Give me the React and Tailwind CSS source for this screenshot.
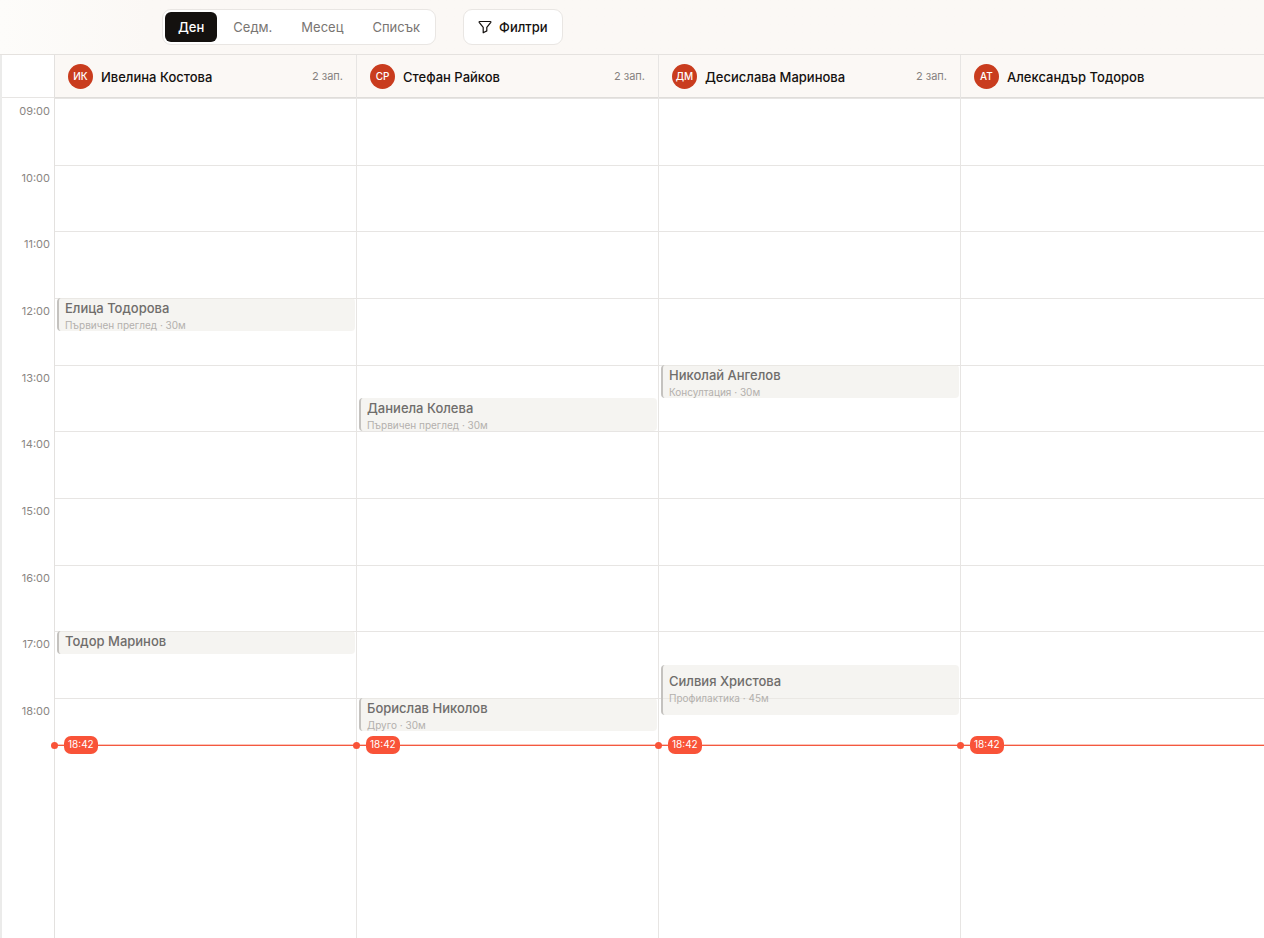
import clsx from "clsx";

const DAY_START = 9 * 60;
const TRACK_MINUTES = 9 * 60;
const NOW = "18:42";

const VIEWS = ["Ден", "Седм.", "Месец", "Списък"];

const HOURS = [
  "09:00",
  "10:00",
  "11:00",
  "12:00",
  "13:00",
  "14:00",
  "15:00",
  "16:00",
  "17:00",
];

const STAFF = [
  {
    initials: "ИК",
    name: "Ивелина Костова",
    count: 2,
    appointments: [
      { client: "Елица Тодорова", service: "Първичен преглед", start: "12:00", minutes: 30 },
      { client: "Тодор Маринов", start: "17:00", minutes: 20 },
    ],
  },
  {
    initials: "СР",
    name: "Стефан Райков",
    count: 2,
    appointments: [
      { client: "Даниела Колева", service: "Първичен преглед", start: "13:30", minutes: 30 },
      { client: "Борислав Николов", service: "Друго", start: "18:00", minutes: 30 },
    ],
  },
  {
    initials: "ДМ",
    name: "Десислава Маринова",
    count: 2,
    appointments: [
      { client: "Николай Ангелов", service: "Консултация", start: "13:00", minutes: 30 },
      { client: "Силвия Христова", service: "Профилактика", start: "17:30", minutes: 45 },
    ],
  },
  {
    initials: "АТ",
    name: "Александър Тодоров",
    count: 0,
    appointments: [],
  },
];

const toMinutes = (time) => {
  const [h, m] = time.split(":").map(Number);
  return h * 60 + m;
};

const toPercent = (minutes) => `${(minutes / TRACK_MINUTES) * 100}%`;

function FilterIcon() {
  return (
    <svg
      viewBox="0 0 14 14"
      className="w-3.5 h-3.5"
      fill="none"
      stroke="currentColor"
      strokeWidth="1.2"
      strokeLinejoin="round"
      aria-hidden="true"
    >
      <path d="M1.6 1.5h10.8a.5.5 0 0 1 .4.8L8.8 7.3v3.6L5.2 12.8V7.3L1.2 2.3a.5.5 0 0 1 .4-.8Z" />
    </svg>
  );
}

function Toolbar() {
  return (
    <header className="flex items-center gap-[27px] h-[55px] pl-[162px] border-b border-[#e5e2df] bg-linear-to-r from-[#fdfcfa] to-[#fbf8f5] to-[150px]">
      <div className="flex h-9 gap-[3px] p-0.5 rounded-[9px] border border-[#e9e6e3] bg-white">
        {VIEWS.map((view, i) => (
          <button
            key={view}
            type="button"
            aria-pressed={i === 0}
            className={clsx(
              "px-[13px] rounded-md text-[13px] leading-5",
              i === 0 ? "bg-[#14110f] text-white font-medium" : "text-[#797572]"
            )}
          >
            {view}
          </button>
        ))}
      </div>
      <button
        type="button"
        className="flex items-center gap-[7px] h-9 px-3.5 rounded-[9px] border border-[#e9e6e3] bg-white text-[13px] leading-5 font-medium text-[#14110f]"
      >
        <FilterIcon />
        Филтри
      </button>
    </header>
  );
}

function Appointment({ client, service, start, minutes }) {
  return (
    <article
      className={clsx(
        "absolute left-0.5 right-px overflow-hidden rounded-[4px] border-l-2 border-[#c4c2bf] bg-[#edebe5]/55 pl-1.5",
        minutes > 30 && "pt-1.5"
      )}
      style={{
        top: toPercent(toMinutes(start) - DAY_START),
        height: toPercent(minutes),
      }}
    >
      <h3 className="text-[13px] leading-5 font-medium text-[#6f6d6b] truncate">
        {client}
      </h3>
      {service && (
        <p className="text-[10px] leading-[14px] text-[#b3b0ad] truncate">
          {service} · {minutes}м
        </p>
      )}
    </article>
  );
}

function NowLine() {
  return (
    <div
      className="absolute inset-x-0 z-10 border-t border-[#f4583f] shadow-[0_-1px_0_#fbc4b9]"
      style={{ top: toPercent(toMinutes(NOW) - DAY_START) }}
    >
      <span className="absolute -left-1 -top-1 w-[7px] h-[7px] rounded-full bg-[#f95338]" />
      <time className="absolute left-[9px] -top-2.5 h-[18px] px-1 rounded-[7px] bg-[#f95338] text-[10px] leading-4 text-white">
        {NOW}
      </time>
    </div>
  );
}

function StaffColumn({ initials, name, count, appointments }) {
  return (
    <section className="flex-1 last:basis-0.5 min-w-0 border-r border-[#e7e5e3] last:border-r-0">
      {/* Header */}
      <div className="flex items-center h-[43px] px-[13px] pt-px border-b border-[#dfddda] bg-[#fbf8f5]">
        <span className="flex items-center justify-center w-[25px] h-[25px] rounded-full bg-[#c93c1e] text-[10px] font-medium text-white">
          {initials}
        </span>
        <h2 className="ml-2 text-[13px] leading-5 font-medium text-[#14110f]">{name}</h2>
        {count > 0 && (
          <span className="ml-auto text-[11px] text-[#85817e]">{count} зап.</span>
        )}
      </div>

      {/* Hour grid, evening entries hang below the last row */}
      <div className="relative h-[600px] grid grid-rows-9">
        {HOURS.map((hour) => (
          <div key={hour} className="border-t border-[#e7e5e3]" />
        ))}
        {appointments.map((item) => (
          <Appointment key={item.start} {...item} />
        ))}
        <NowLine />
      </div>
      <div className="border-t border-[#e7e5e3]" />
    </section>
  );
}

export default function App() {
  return (
    <div
      lang="bg"
      className="min-h-screen flex flex-col bg-white font-['Inter','Noto_Sans',sans-serif] text-[#14110f]"
    >
      <Toolbar />
      <main className="flex-1 flex border-l-2 border-[#ebebea]">
        {/* Time gutter */}
        <div className="w-[53px] shrink-0 border-r border-[#e3e1df] text-right text-[11px] leading-4 text-[#8a8683]">
          <div className="h-[43px] border-b border-[#e7e5e3]" />
          <div className="h-[600px] grid grid-rows-9">
            {HOURS.map((hour) => (
              <div key={hour} className="pt-[5px] pr-1">
                {hour}
              </div>
            ))}
          </div>
          <div className="pt-[5px] pr-1">18:00</div>
        </div>

        {STAFF.map((person) => (
          <StaffColumn key={person.initials} {...person} />
        ))}
      </main>
    </div>
  );
}
